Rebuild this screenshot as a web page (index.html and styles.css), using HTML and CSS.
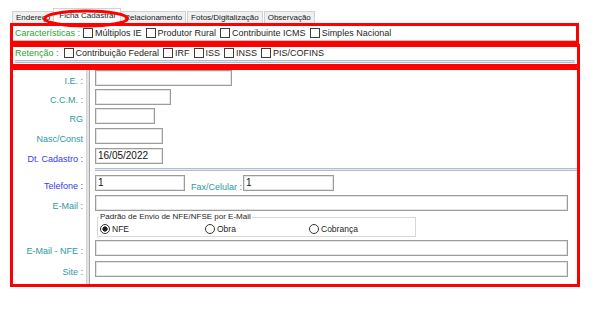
FILE: index.html
```html
<!DOCTYPE html>
<html lang="pt-BR">
<head>
<meta charset="utf-8">
<title>Ficha Cadastral</title>
<link rel="stylesheet" href="styles.css">
</head>
<body>
<div class="screen">
  <div class="tabs">
    <div class="tab">Endereço</div>
    <div class="tab active">Ficha Cadastral</div>
    <div class="tab">Relacionamento</div>
    <div class="tab">Fotos/Digitalização</div>
    <div class="tab">Observação</div>
  </div>
  <svg class="mark" width="88" height="20" viewBox="0 0 88 20"><ellipse cx="43" cy="9.5" rx="41.5" ry="7.5" fill="none" stroke="#ff0000" stroke-width="3"/></svg>

  <div class="box box1">
    <div class="checkrow row-top">
      <span class="lbl green">Características :</span>
      <span class="chk first"></span><span>Múltiplos IE</span>
      <span class="chk"></span><span>Produtor Rural</span>
      <span class="chk"></span><span>Contribuinte ICMS</span>
      <span class="chk"></span><span>Simples Nacional</span>
    </div>
  </div>

  <div class="box box2">
    <div class="checkrow row-ret">
      <span class="lbl green">Retenção :</span>
      <span class="chk first wide"></span><span>Contribuição Federal</span>
      <span class="chk"></span><span>IRF</span>
      <span class="chk"></span><span>ISS</span>
      <span class="chk"></span><span>INSS</span>
      <span class="chk"></span><span>PIS/COFINS</span>
    </div>
    <div class="dline dline-ret"></div>
  </div>

  <div class="box box3">
    <div class="form">
      <div class="vsep"></div>

      <label class="flbl teal r1">I.E. :</label>
      <div class="inp r1 w136"></div>

      <label class="flbl teal r2">C.C.M. :</label>
      <div class="inp r2 w76"></div>

      <label class="flbl teal r3">RG</label>
      <div class="inp r3 w60"></div>

      <label class="flbl teal r4">Nasc/Const</label>
      <div class="inp r4 w68"></div>

      <label class="flbl blue r5">Dt. Cadastro :</label>
      <div class="inp r5 w68">16/05/2022</div>

      <div class="dline fieldline r6"></div>

      <label class="flbl blue r7">Telefone :</label>
      <div class="telrow r7">
        <div class="inp w90">1</div>
        <span class="fax teal">Fax/Celular :</span>
        <div class="inp w91">1</div>
      </div>

      <label class="flbl teal r8">E-Mail :</label>
      <div class="inp r8 w473"></div>

      <fieldset class="group r9">
        <legend>Padrão de Envio de NFE/NFSE por E-Mail</legend>
        <div class="radios">
          <span class="opt"><span class="radio on"></span>NFE</span>
          <span class="opt"><span class="radio"></span>Obra</span>
          <span class="opt"><span class="radio"></span>Cobrança</span>
        </div>
      </fieldset>

      <label class="flbl teal r10">E-Mail - NFE :</label>
      <div class="inp r10 w473"></div>

      <label class="flbl teal r11">Site :</label>
      <div class="inp r11 w473"></div>
    </div>
  </div>
</div>
</body>
</html>
```
FILE: styles.css
```css
* { box-sizing: border-box; }
html, body { margin: 0; padding: 0; background: #fff; }
body {
  width: 599px;
  height: 309px;
  overflow: hidden;
  font-family: "Liberation Sans", Arial, sans-serif;
  color: #1e1e1e;
}
.screen { position: relative; padding-left: 10px; }

/* tabs */
.tabs {
  display: flex;
  align-items: flex-end;
  height: 23px;
  padding: 8px 0 0 2px;
}
.tab {
  height: 12px;
  line-height: 11px;
  font-size: 8px;
  padding: 0 3px;
  border: 1px solid #d3d3d3;
  border-bottom: none;
  background: #f0f0f0;
  margin-right: 1px;
  white-space: nowrap;
  color: #1a1a1a;
}
.tab.active {
  height: 15px;
  line-height: 13px;
  padding: 0 5px;
  background: #fff;
  margin: 0 -1px 0 -2px;
  position: relative;
  z-index: 1;
}
.mark { position: absolute; left: 43px; top: 9px; z-index: 5; }

/* red annotation boxes */
.box { border: 3px solid #ff0000; background: #fff; }
.box1 { width: 569px; height: 21px; }
.box2 { width: 570px; height: 23px; }
.box3 { width: 570px; height: 220px; }

.checkrow {
  display: flex;
  align-items: center;
  padding-left: 2px;
  font-size: 9px;
  white-space: nowrap;
}
.row-top { height: 15px; border-bottom: 1px solid #c4c4c4; }
.row-ret { height: 11px; }
.lbl.green { color: #2f9f2f; }
.chk {
  width: 10px;
  height: 10px;
  border: 1px solid #3c3c3c;
  background: #fff;
  margin: 0 2px 0 4px;
  flex: none;
}
.chk.first { margin-left: 3px; }
.chk.wide { margin-left: 5px; }

.dline {
  height: 3px;
  border-top: 1px solid #b3bdcc;
  border-bottom: 1px solid #b3bdcc;
  background: #e4e9f0;
}
.dline-ret { margin: 2px 2px 0 2px; }

/* form */
.form {
  display: grid;
  grid-template-columns: 73px 4px 487px;
  grid-template-rows: 16px 19px 19px 20px 20px 7px 20px 20px 26px 19px 21px 1fr;
  height: 214px;
}
.vsep {
  grid-column: 2;
  grid-row: 1 / -1;
  border-left: 1px solid #d2d2d2;
  border-right: 1px solid #a9a9a9;
  background: #e2e2e2;
}
.r1 { grid-row: 1; } .r2 { grid-row: 2; } .r3 { grid-row: 3; }
.r4 { grid-row: 4; } .r5 { grid-row: 5; } .r6 { grid-row: 6; }
.r7 { grid-row: 7; } .r8 { grid-row: 8; } .r9 { grid-row: 9; }
.r10 { grid-row: 10; } .r11 { grid-row: 11; }

.flbl {
  grid-column: 1;
  align-self: end;
  text-align: right;
  padding-right: 3px;
  font-size: 9px;
  line-height: 16px;
  margin-bottom: -3px;
  white-space: nowrap;
}
.teal { color: #2e9a9e; }
.blue { color: #3838ee; }

.inp {
  height: 16px;
  border: 1px solid #9c9c9c;
  box-shadow: inset 0 0 0 1px #e4e4e4;
  background: #fff;
  font-size: 10px;
  line-height: 14px;
  padding-left: 2px;
  color: #111;
}
.form > .inp, .form > .telrow, .form > .fieldline {
  grid-column: 3;
  align-self: end;
  margin-left: 5px;
}
.form > .inp { justify-self: start; }
.w136 { width: 137px; }
.w76 { width: 76px; }
.w60 { width: 60px; }
.w68 { width: 68px; }
.w90 { width: 90px; }
.w91 { width: 91px; }
.w473 { width: 473px; }

.telrow { display: flex; align-items: flex-end; }
.fax {
  font-size: 9px;
  line-height: 16px;
  margin: 0 1px -4px 6px;
  white-space: nowrap;
}

.group {
  grid-column: 3;
  align-self: end;
  justify-self: start;
  margin: 0 0 0 7px;
  padding: 0 0 0 1px;
  width: 319px;
  height: 24px;
  border: 1px solid #d8d8d8;
  min-width: 0;
}
.group legend {
  font-size: 8px;
  line-height: 8px;
  padding: 0 1px;
  color: #1e1e1e;
  white-space: nowrap;
}
.radios {
  display: grid;
  grid-template-columns: 105px 104px auto;
  align-items: center;
  height: 15px;
  padding-left: 1px;
  font-size: 8.5px;
}
.opt { display: flex; align-items: center; white-space: nowrap; }
.radio {
  width: 10px;
  height: 10px;
  border: 1px solid #333;
  border-radius: 50%;
  background: #fff;
  margin-right: 2px;
  flex: none;
}
.radio.on { background: radial-gradient(circle, #1e1e1e 0 2.3px, #fff 2.9px); }
```
